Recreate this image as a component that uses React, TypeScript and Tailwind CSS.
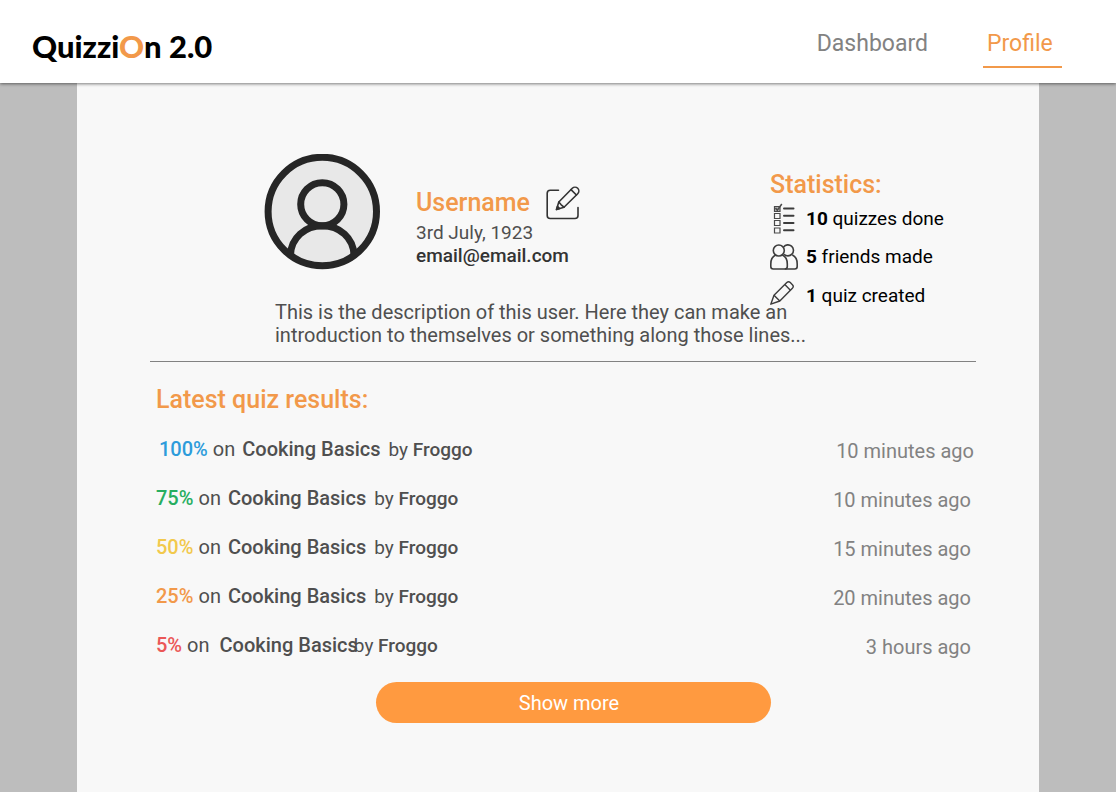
type Result = {
  score: string;
  scoreClass: string;
  time: string;
  rowClass: string;
  titleClass: string;
  byClass: string;
};

const results: Result[] = [
  { score: "100%", scoreClass: "text-[#2d9cdb]", time: "10 minutes ago", rowClass: "pl-[9px] pr-[2px]", titleClass: "ml-[7px]", byClass: "ml-2" },
  { score: "75%", scoreClass: "text-[#27ae60]", time: "10 minutes ago", rowClass: "pl-1.5 pr-[5px]", titleClass: "ml-[7px]", byClass: "ml-2" },
  { score: "50%", scoreClass: "text-[#f2c94c]", time: "15 minutes ago", rowClass: "pl-1.5 pr-[5px]", titleClass: "ml-[7px]", byClass: "ml-2" },
  { score: "25%", scoreClass: "text-[#f2994a]", time: "20 minutes ago", rowClass: "pl-1.5 pr-[5px]", titleClass: "ml-[7px]", byClass: "ml-2" },
  { score: "5%", scoreClass: "text-[#eb5757]", time: "3 hours ago", rowClass: "pl-1.5 pr-[5px]", titleClass: "ml-2.5", byClass: "-ml-1" },
];

function Avatar() {
  return (
    <svg viewBox="0 0 116 116" className="size-[116px] shrink-0" role="img" aria-label="Avatar">
      <circle cx="58.300" cy="57.500" r="54.2" fill="#e8e8e8" stroke="#262626" strokeWidth="7" />
      <circle cx="58.300" cy="50.300" r="21.6" fill="none" stroke="#262626" strokeWidth="7" />
      <path d="M26.500 101C27 84 41 71.700 58.300 71.700S89.500 84 90 101" fill="none" stroke="#262626" strokeWidth="7" />
    </svg>
  );
}

function EditIcon() {
  return (
    <svg viewBox="0 0 34 34" className="h-[34px] w-[34px]" fill="none" stroke="#333" strokeWidth="1.6" strokeLinejoin="round" strokeLinecap="round" aria-hidden="true">
      <path d="M12.500 4.200H4.200A3 3 0 0 0 1.200 7.200V29.500A3 3 0 0 0 4.200 32.500H29A3 3 0 0 0 32 29.500V21.500" />
      <path d="M10.500 23.500L12.800 16 26.300 2.300A3.500 3.500 0 0 1 31.700 7.700L18 21.200Z" />
      <path d="M12.800 16L15.200 18.800 18 21.200M25 3.600L30.400 9" />
      <path d="M10.500 23.500L11.500 20.400 13.600 22.500Z" fill="#333" />
    </svg>
  );
}

function ChecklistIcon() {
  return (
    <svg viewBox="0 0 22 32" className="h-8 w-[22px]" fill="none" stroke="#4a4a4a" strokeWidth="1.2" aria-hidden="true">
      <path d="M1.500 3.500H7V8.500H1.500Z" fill="#b5b5b5" />
      <path d="M1.500 10.500H7V15.500H1.500ZM1.500 17.500H7V22.500H1.500ZM1.500 25H7V30H1.500Z" />
      <path d="M2.500 5L4.300 7.300 8.800 1" strokeWidth="1.500" />
      <path d="M11 5.500H20.500M11 12.700H20.500M11 20H20.500M11 27.200H20.500" stroke="#3c3c3c" strokeWidth="2" strokeLinecap="round" />
    </svg>
  );
}

function FriendsIcon() {
  return (
    <svg viewBox="0 0 28 26" className="h-[26px] w-7" fill="none" stroke="#3c3c3c" strokeWidth="1.6" strokeLinejoin="round" aria-hidden="true">
      <circle cx="8.800" cy="6.500" r="5.500" />
      <path d="M13.600 3A5.500 5.500 0 1 1 14 10.200" />
      <path d="M5.800 11.100C2.500 12.500 .8 16 .8 20V22.500C.8 24 1.800 25 3.300 25H14.800C16.300 25 17.300 24 17.300 22.500V20C17.300 16 15.500 12.500 12.200 11.100" />
      <path d="M22.300 11.100C25.600 12.500 27.200 16 27.200 20V22.500C27.200 24 26.200 25 24.700 25H14.800" />
    </svg>
  );
}

function PencilIcon() {
  return (
    <svg viewBox="0 0 24 24" className="size-6" fill="none" stroke="#3c3c3c" strokeWidth="1.400" strokeLinejoin="round" aria-hidden="true">
      <path d="M.8 23.200L4 14.200 16.800 1.600A2.500 2.500 0 0 1 20.300 1.600L22.400 3.700A2.500 2.500 0 0 1 22.400 7.200L9.800 20Z" />
      <path d="M4 14.200L9.800 20M14.800 3.600L20.400 9.200" />
    </svg>
  );
}

export default function App() {
  return (
    <div className="flex min-h-screen flex-col bg-[#bdbdbd] font-[Roboto,sans-serif]">
      <header className="relative flex h-[83px] items-start justify-between bg-white pr-[54px] pl-8 shadow-[0_1px_3px_rgba(0,0,0,0.5)]">
        <a href="#home" className="pt-7 font-[Lato,sans-serif] text-[31px] leading-9 font-black text-black">
          Quizzi<span className="text-[#f2994a]">O</span>n 2.0
        </a>
        <nav className="flex gap-[55px] pt-7 text-[23px] leading-8">
          <a href="#dashboard" className="text-[#828282]">Dashboard</a>
          <a href="#profile" aria-current="page" className="h-10 w-[79px] border-b-2 border-[#f2994a] pl-1 text-[#f2994a]">Profile</a>
        </nav>
      </header>

      <main className="mx-[77px] flex-1 bg-[#f8f8f8] pr-[63px] pl-[73px]">
        <section className="flex items-start pt-[71px] pl-[114px]">
          <Avatar />
          <div className="ml-9 pt-[31px]">
            <div className="flex items-center gap-4">
              <h1 className="text-[25px] leading-9 font-medium text-[#f2994a]">Username</h1>
              <button type="button" aria-label="Edit profile" className="cursor-pointer"><EditIcon /></button>
            </div>
            <p className="text-[19px] leading-[23px] text-[#4f4f4f]">3rd July, 1923</p>
            <p className="text-[19px] leading-[23px] font-medium text-[#333]">email@email.com</p>
          </div>
          <aside className="ml-auto w-[206px] pt-4 text-black">
            <h2 className="text-[25px] leading-[30px] font-medium text-[#f2994a]">Statistics:</h2>
            <ul className="text-[19px] leading-6">
              <li className="flex h-[37px] items-center"><span className="flex w-9 pl-[3px]"><ChecklistIcon /></span><span><b className="font-bold">10</b> quizzes done</span></li>
              <li className="flex h-[39px] items-center"><span className="flex w-9"><FriendsIcon /></span><span><b className="font-bold">5</b> friends made</span></li>
              <li className="flex h-10 items-center"><span className="flex w-9 pb-1.5"><PencilIcon /></span><span><b className="font-bold">1</b> quiz created</span></li>
            </ul>
          </aside>
        </section>
        <p className="-mt-[15px] ml-[125px] max-w-[560px] text-xl leading-[23px] text-[#4f4f4f]">
          This is the description of this user. Here they can make an introduction to themselves or something along those lines...
        </p>

        <section className="mt-3.5 border-t border-[#828282] pt-[23px]">
          <h2 className="pl-1.5 text-[25px] leading-[30px] font-medium text-[#f2994a]">Latest quiz results:</h2>
          <ul className="mt-2.5 text-xl text-[#4f4f4f]">
            {results.map((r) => (
              <li key={r.score} className={`flex h-[49px] items-center justify-between ${r.rowClass}`}>
                <p className="flex items-baseline whitespace-nowrap">
                  <span className={`font-medium ${r.scoreClass}`}>{r.score}</span>
                  <span className="ml-[5px]">on</span>
                  <span className={`font-medium ${r.titleClass}`}>Cooking Basics</span>
                  <span className={`text-[19px] ${r.byClass}`}>by <span className="font-medium">Froggo</span></span>
                </p>
                <time className="pt-0.5 text-[#828282]">{r.time}</time>
              </li>
            ))}
          </ul>
          <button type="button" className="mx-auto mt-3 mb-16 block h-[41px] w-[395px] max-w-full translate-x-2.5 cursor-pointer rounded-full bg-[#ff9a40] pr-2 text-xl text-white">
            Show more
          </button>
        </section>
      </main>
    </div>
  );
}
